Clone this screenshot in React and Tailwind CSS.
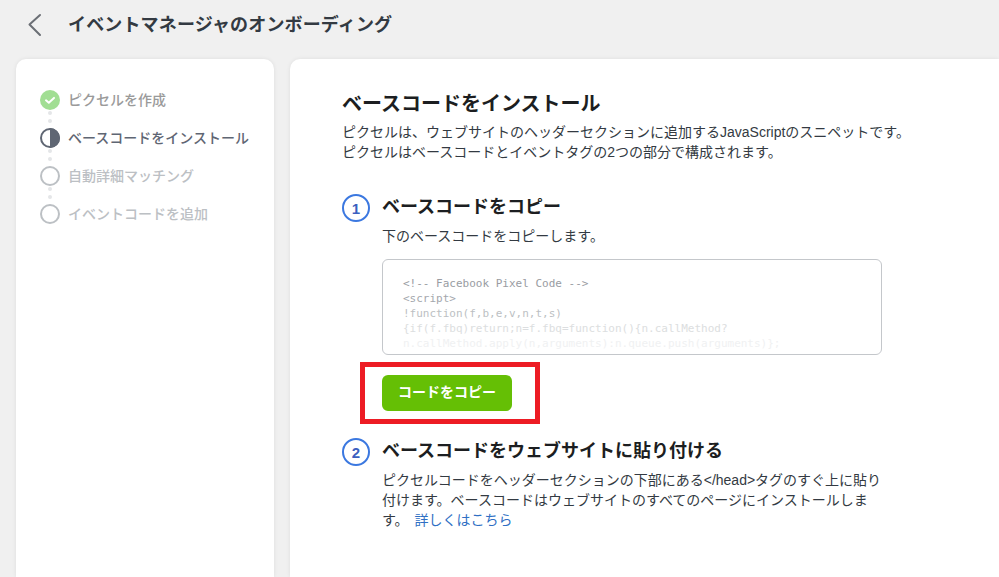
import React from 'react';

const codeLines = [
    { text: '<!-- Facebook Pixel Code -->', color: 'text-[#999ca2]' },
    { text: '<script>', color: 'text-[#a4a7ad]' },
    { text: '!function(f,b,e,v,n,t,s)', color: 'text-[#bcbfc3]' },
    { text: '{if(f.fbq)return;n=f.fbq=function(){n.callMethod?', color: 'text-[#dcdee0]' },
    { text: 'n.callMethod.apply(n,arguments):n.queue.push(arguments)};', color: 'text-[#f0f1f2]' },
];

const StepIcon = ({ state }) => {
    if (state === 'done') {
        return (
            <svg width="20" height="20" viewBox="0 0 20 20">
                <circle cx="10" cy="10" r="10" fill="#a1de93" />
                <path d="M6 10.3l2.8 2.4L14 7.9" fill="none" stroke="#fff" strokeWidth="2" strokeLinecap="round" strokeLinejoin="round" />
            </svg>
        );
    }
    if (state === 'active') {
        return (
            <svg width="20" height="20" viewBox="0 0 20 20">
                <circle cx="10" cy="10" r="9" fill="#fff" stroke="#5f6673" strokeWidth="2" />
                <path d="M10 0a10 10 0 0 1 0 20z" fill="#5f6673" />
            </svg>
        );
    }
    return (
        <svg width="20" height="20" viewBox="0 0 20 20">
            <circle cx="10" cy="10" r="9" fill="#fff" stroke="#bcc0c4" strokeWidth="2" />
        </svg>
    );
};

const Dots = () => (
    <div className="flex flex-col items-center gap-[4px] w-5 h-[18px] pt-[1px]">
        <span className="w-[4px] h-[4px] rounded-full bg-[#e4e6e8]" />
        <span className="w-[4px] h-[4px] rounded-full bg-[#e4e6e8]" />
    </div>
);

const steps = [
    { label: 'ピクセルを作成', state: 'done', color: 'text-[#9a9a9a]' },
    { label: 'ベースコードをインストール', state: 'active', color: 'text-[#5f6673]' },
    { label: '自動詳細マッチング', state: 'todo', color: 'text-[#bcc0c4]' },
    { label: 'イベントコードを追加', state: 'todo', color: 'text-[#bcc0c4]' },
];

const NumberBadge = ({ n }) => (
    <div className="w-[28px] h-[28px] rounded-full border-2 border-[#3b78e0] bg-white flex items-center justify-center text-[15px] font-bold text-[#3b5fc0] leading-none shrink-0 font-['Liberation_Sans',sans-serif]">
        {n}
    </div>
);

const App = () => {
    return (
        <div className="w-[999px] h-[577px] overflow-hidden bg-[#f0f0f0] flex flex-col font-['Liberation_Sans','Noto_Sans_CJK_JP',sans-serif]">
            {/* Header */}
            <div className="h-[59px] shrink-0 flex items-center pl-[26px] pb-[9px]">
                <svg width="16" height="24" viewBox="0 0 16 24" className="text-[#6b6f75]">
                    <path d="M14 3L3.5 12.5 14 23" transform="translate(0 -1)" fill="none" stroke="currentColor" strokeWidth="2" strokeLinecap="round" strokeLinejoin="round" />
                </svg>
                <h1 className="ml-[26px] text-[18px] font-bold leading-none text-[#333a42] tracking-[0.15px]">イベントマネージャのオンボーディング</h1>
            </div>

            <div className="flex-1 flex gap-[16px] pl-[16px] min-h-0">
                {/* Steps */}
                <div className="w-[258px] bg-white rounded-t-[10px] shadow-[0_0_4px_rgba(0,0,0,0.08)] pl-[24px] pt-[31px]">
                    {steps.map((step, i) => (
                        <div key={step.label}>
                            <div className="flex items-center h-[20px] gap-[8px]">
                                <StepIcon state={step.state} />
                                <span className={`text-[14px] font-medium leading-none ${step.color}`}>{step.label}</span>
                            </div>
                            {i < steps.length - 1 && <Dots />}
                        </div>
                    ))}
                </div>

                {/* Main */}
                <div className="flex-1 bg-white rounded-tl-[10px] shadow-[0_0_4px_rgba(0,0,0,0.08)] pl-[52px] pt-[30px] text-[#333a42]">
                    <h2 className="text-[20px] font-bold leading-[30px] text-[#1c1e21]">ベースコードをインストール</h2>
                    <p className="mt-[3px] text-[14px] leading-[20px] text-[#333a42]">
                        ピクセルは、ウェブサイトのヘッダーセクションに追加するJavaScriptのスニペットです。<br />
                        ピクセルはベースコードとイベントタグの2つの部分で構成されます。
                    </p>

                    <div className="mt-[32px] flex gap-[12px]">
                        <NumberBadge n="1" />
                        <div className="w-[500px]">
                            <h3 className="text-[18px] font-bold leading-[26px] text-[#1c1e21]">ベースコードをコピー</h3>
                            <p className="mt-[6px] text-[14px] leading-[20px]">下のベースコードをコピーします。</p>
                            <div className="relative mt-[13px] h-[96px] overflow-hidden rounded-[6px] border border-[#c4c7cb] pl-[20px] pt-[16px] font-['DejaVu_Sans_Mono',monospace] text-[11px] leading-[15px] whitespace-pre">
                                {codeLines.map(line => (
                                    <div key={line.text} className={line.color}>{line.text}</div>
                                ))}
                            </div>
                            <div className="relative mt-[20px] w-[130px] h-[36px]">
                                <button className="w-full h-full pb-[2px] rounded-[6px] bg-[#65bf05] text-white text-[14px] font-bold leading-none">コードをコピー</button>
                                <div className="absolute left-[-22px] top-[-13px] w-[180px] h-[62px] border-[5px] border-[#ed1c24]" />
                            </div>
                        </div>
                    </div>

                    <div className="mt-[27px] flex gap-[12px]">
                        <NumberBadge n="2" />
                        <div className="w-[510px]">
                            <h3 className="text-[18px] font-bold leading-[26px] text-[#1c1e21]">ベースコードをウェブサイトに貼り付ける</h3>
                            <p className="mt-[6px] text-[14px] leading-[20px]">
                                ピクセルコードをヘッダーセクションの下部にある&lt;/head&gt;タグのすぐ上に貼り付けます。ベースコードはウェブサイトのすべてのページにインストールします。
                                <a className="ml-[6px] text-[#2f6fc4]">詳しくはこちら</a>
                            </p>
                        </div>
                    </div>
                </div>
            </div>
        </div>
    );
};

export default App;
